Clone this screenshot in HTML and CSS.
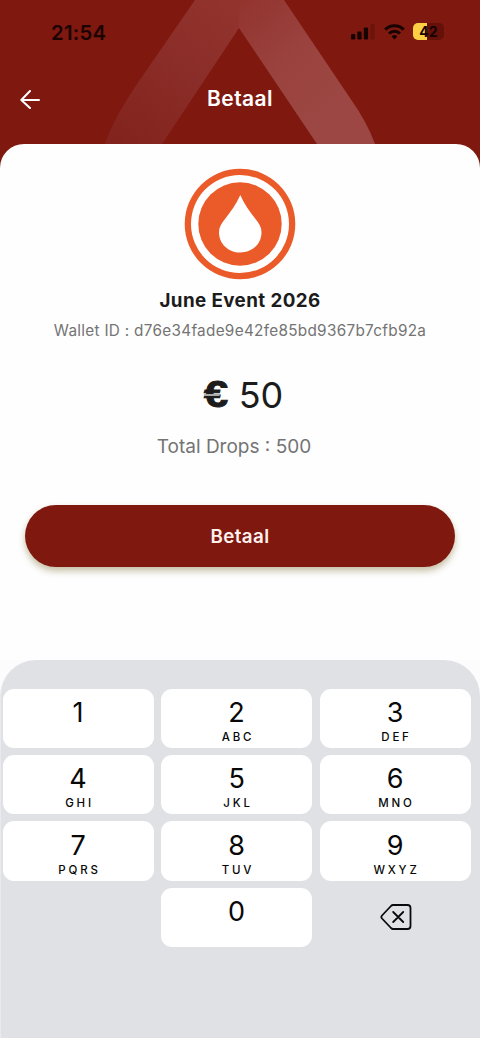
FILE: index.html
```html
<!DOCTYPE html>
<html lang="nl">
<head>
<meta charset="utf-8">
<meta name="viewport" content="width=device-width, initial-scale=1">
<title>Betaal</title>
<link rel="stylesheet" href="styles.css">
</head>
<body>
<div class="screen">
  <header class="header">
    <svg class="header-art" width="480" height="180" viewBox="0 0 480 180" aria-hidden="true">
      <defs>
        <linearGradient id="left" gradientUnits="userSpaceOnUse" x1="240" y1="0" x2="125" y2="150">
          <stop offset="0" stop-color="#93342f"/><stop offset=".5" stop-color="#8a2c27"/><stop offset="1" stop-color="#83231e"/>
        </linearGradient>
        <linearGradient id="right" gradientUnits="userSpaceOnUse" x1="235" y1="10" x2="330" y2="110">
          <stop offset="0" stop-color="#93342f"/><stop offset=".5" stop-color="#9a423e"/><stop offset="1" stop-color="#9c4743"/>
        </linearGradient>
      </defs>
      <path fill="url(#left)" d="M195 0H241V28H239L162 144H105Q112 122 135 87Z"/>
      <path fill="url(#right)" d="M239 0H284L350 98Q367 122 375 144H317L239 28Z"/>
    </svg>
    <div class="status">
      <span class="time">21:54</span>
      <div class="status-icons">
        <svg width="25" height="16" viewBox="0 0 25 16">
          <rect x="0" y="10" width="4.3" height="5.5" rx="1.3"/><rect x="6.3" y="7.5" width="4.3" height="8" rx="1.3"/><rect x="12.8" y="3.5" width="4.3" height="12" rx="1.3"/><rect x="19.3" y="0" width="4.3" height="15.5" rx="1.3" opacity=".2"/>
        </svg>
        <svg width="21" height="16" viewBox="0 0 21 16" fill="none" stroke="#170302" stroke-width="3">
          <path d="M1.2 5.6a13.2 13.2 0 0 1 18.6 0"/><path d="M5 9.5a7.8 7.8 0 0 1 11 0"/><path d="M10.5 15.4L7.6 12.4a4.1 4.1 0 0 1 5.8 0Z" fill="#170302" stroke="none"/>
        </svg>
        <div class="battery"><span>42</span></div>
      </div>
    </div>
    <div class="titlebar">
      <svg class="back" width="20" height="20" viewBox="0 0 20 20" fill="none" stroke="#fff" stroke-width="2" stroke-linecap="round" stroke-linejoin="round"><path d="M10 1L1.3 10L10 18M1.3 10H19"/></svg>
      <h1>Betaal</h1>
    </div>
  </header>
  <main class="card">
    <svg class="logo" width="112" height="112" viewBox="0 0 112 112">
      <circle cx="56" cy="56" r="55.3" fill="#eb5b2a"/><circle cx="56" cy="56" r="49" fill="#fff"/><circle cx="56" cy="56" r="41.7" fill="#eb5b2a"/>
      <path fill="#fff" d="M56.3 27C52.5 36 46.5 44 41 51C37 56 35 59.5 35 64.2C35 76 44.5 84.5 56.3 84.5S77.5 76 77.5 64.2C77.5 59.5 75.5 56 71.5 51C66 44 60 36 56.3 27Z"/>
    </svg>
    <h2>June Event 2026</h2>
    <p class="wallet">Wallet ID : d76e34fade9e42fe85bd9367b7cfb92a</p>
    <div class="amount"><span class="euro">€</span><span class="value">50</span></div>
    <p class="drops">Total Drops : 500</p>
    <button class="pay">Betaal</button>
  </main>
  <section class="keyboard">
    <div class="keys">
      <div class="key"><b>1</b></div>
      <div class="key"><b>2</b><small>ABC</small></div>
      <div class="key"><b>3</b><small>DEF</small></div>
      <div class="key"><b>4</b><small>GHI</small></div>
      <div class="key"><b>5</b><small>JKL</small></div>
      <div class="key"><b>6</b><small>MNO</small></div>
      <div class="key"><b>7</b><small>PQRS</small></div>
      <div class="key"><b>8</b><small>TUV</small></div>
      <div class="key"><b>9</b><small>WXYZ</small></div>
      <div class="blank"></div>
      <div class="key"><b>0</b></div>
      <div class="delete">
        <svg width="32" height="26" viewBox="0 0 32 26" fill="none" stroke="#090a0b" stroke-width="1.8" stroke-linecap="round" stroke-linejoin="round"><path d="M13 1H27.5Q30.5 1 30.5 4V22Q30.5 25 27.5 25H13Q12 25 11 24L2 14.5Q.7 13 2 11.5L11 2Q12 1 13 1ZM13.2 8L23.2 18M23.2 8L13.2 18"/></svg>
      </div>
    </div>
  </section>
</div>
</body>
</html>
```

FILE: styles.css
```css
* { box-sizing: border-box; }
body, h1, h2, p { margin: 0; }
body { background: #fff; font-family: Inter, "Liberation Sans", sans-serif; }
.screen { width: 480px; height: 1038px; overflow: hidden; display: flex; flex-direction: column; background: #fefefe; }

.header { position: relative; height: 180px; flex: none; background: #7f180f; }
.header-art { position: absolute; left: 0; top: 0; }
.status { position: relative; display: flex; justify-content: space-between; height: 64px; padding: 20px 36px 0 51px; }
.time { font-size: 20.3px; line-height: 26px; font-weight: 600; color: #1b0302; letter-spacing: .25px; }
.status-icons { display: flex; gap: 8px; padding-top: 4px; fill: #170302; }
.battery { width: 31px; height: 17px; margin-top: -1px; border-radius: 5px; background: linear-gradient(90deg, #fbd044 14px, #651009 14px); text-align: center; font-size: 14px; line-height: 18px; font-weight: 700; color: #170302; }
.titlebar { position: relative; display: grid; grid-template-columns: 20px 1fr 20px; align-items: center; height: 70px; padding: 0 20px; }
.titlebar h1 { color: #fff; text-align: center; font-size: 21px; line-height: 28px; font-weight: 600; letter-spacing: .4px; }
.back { margin-top: 2px; }

.card { position: relative; flex: none; height: 516px; margin-top: -36px; padding-top: 24px; border-radius: 24px 24px 0 0; background: #fefefe; display: flex; flex-direction: column; align-items: center; }
.logo { flex: none; }
.card h2 { margin-top: 9px; font-size: 18.8px; line-height: 24px; font-weight: 700; letter-spacing: .4px; color: #1c1c1c; white-space: nowrap; }
.wallet { margin-top: 7px; font-size: 15.3px; line-height: 22px; letter-spacing: .3px; color: #747474; white-space: nowrap; }
.amount { display: flex; align-items: center; gap: 10px; height: 44px; margin-top: 31px; padding-left: 7px; color: #1c1c1c; }
.euro { position: relative; width: 25px; font: 700 36px/44px "Liberation Sans", Arial, sans-serif; -webkit-text-stroke: 1px #1c1c1c; transform: scaleX(1.2); transform-origin: left; }
.euro::after { content: ""; position: absolute; left: 0; top: 21px; width: 13px; height: 2px; background: #aaa; }
.value { font-size: 36px; line-height: 44px; }
.drops { margin: 18px 12px 0 0; font-size: 19px; line-height: 24px; color: #747474; white-space: nowrap; }
.pay { width: 430px; height: 62px; flex: none; margin-top: 46px; padding: 0; border: 0; border-radius: 31px; background: #7f180f; box-shadow: 0 4px 7px rgba(108, 94, 30, .4); color: #fdf0ed; font: 600 18.8px/61px Inter, "Liberation Sans", sans-serif; letter-spacing: .4px; }

.keyboard { position: relative; flex: 1; padding: 28.5px 9px 0 1px; border: solid #e9eaed; border-width: 0 0 0 1px; border-radius: 36px 36px 0 0; background: #dfe1e5; box-shadow: 0 0 0 40px #fcfcfc; clip-path: inset(0); }
.keys { display: grid; grid-template-columns: repeat(3, 151px); column-gap: 7.5px; row-gap: 7.3px; grid-auto-rows: 59.2px; padding-left: .6px; }
.key { display: flex; flex-direction: column; align-items: center; padding-top: 8.5px; border-radius: 11px; background: #fff; color: #080808; }
.key b { font-size: 27px; line-height: 32px; font-weight: 400; }
.key small { font-size: 11.5px; line-height: 14px; font-weight: 500; letter-spacing: 2.8px; margin: 1px -2.8px 0 0; }
.delete { display: grid; place-items: center; padding: 0 0 2px 1px; }
```
